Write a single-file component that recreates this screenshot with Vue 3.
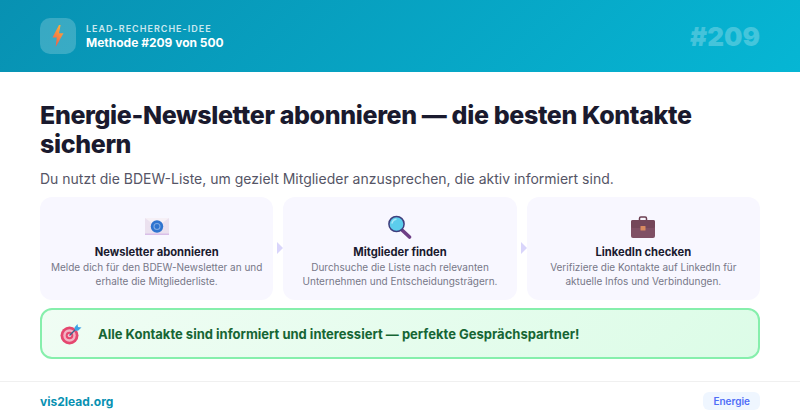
<template>
  <div class="slide">
    <header class="top">
      <div class="top-left">
        <div class="logo">
          <svg class="bolt" viewBox="0 0 12 22" width="12" height="22">
            <defs>
              <linearGradient id="boltFill" x1="0.7" y1="0" x2="0.3" y2="1">
                <stop offset="0" stop-color="#fbb03b" />
                <stop offset="1" stop-color="#ef5a4c" />
              </linearGradient>
            </defs>
            <path d="M7 0 L0.5 12.5 H4.8 L3.6 22 L11.5 8.2 H7 L8.6 0 Z" fill="url(#boltFill)" />
          </svg>
        </div>
        <div class="top-text">
          <div class="eyebrow">LEAD-RECHERCHE-IDEE</div>
          <div class="method">Methode #209 von 500</div>
        </div>
      </div>
      <div class="big-num">#209</div>
    </header>

    <main class="content">
      <h1 class="title">Energie-Newsletter abonnieren — die besten Kontakte sichern</h1>
      <p class="lead">Du nutzt die BDEW-Liste, um gezielt Mitglieder anzusprechen, die aktiv informiert sind.</p>

      <div class="steps">
        <div v-for="step in steps" :key="step.title" class="step">
          <svg class="step-icon" viewBox="0 0 24 24" width="24" height="24">
            <template v-if="step.icon === 'mail'">
              <rect x="0" y="3" width="24" height="17" fill="#ebe1ef" />
              <path d="M0 3 L12 12 L24 3 Z" fill="#f6f0f6" />
              <rect x="0" y="18.5" width="24" height="1.5" fill="#d9bfe8" />
              <circle cx="12" cy="11.5" r="6.2" fill="#2f74cf" />
              <circle cx="12" cy="11.5" r="3" fill="none" stroke="#7fa9e2" stroke-width="1.1" />
            </template>
            <template v-else-if="step.icon === 'search'">
              <path d="M14.5 15.5 L21.5 22" stroke="#6f3f86" stroke-width="3.6" stroke-linecap="round" />
              <circle cx="8.5" cy="9" r="7.6" fill="#5ccdec" stroke="#3f3f7e" stroke-width="1.5" />
              <path d="M4 8 A5 5 0 0 1 8 4.2" fill="none" stroke="#a8e8f7" stroke-width="1.4" stroke-linecap="round" />
            </template>
            <template v-else>
              <path d="M8.5 6 V3.4 Q8.5 2 9.9 2 H14.1 Q15.5 2 15.5 3.4 V6" fill="none" stroke="#6b3f52" stroke-width="1.5" />
              <rect x="0" y="5" width="24" height="18" rx="2" fill="#7f4f64" />
              <rect x="0" y="5" width="24" height="8" rx="2" fill="#744659" />
              <rect x="9.5" y="11" width="5" height="4.5" rx="0.6" fill="#d98a60" />
            </template>
          </svg>
          <div class="step-title">{{ step.title }}</div>
          <div class="step-text">{{ step.text }}</div>
        </div>
      </div>

      <div class="result">
        <svg class="result-icon" viewBox="0 0 22 22" width="22" height="22">
          <circle cx="9.5" cy="12.5" r="9" fill="#e5476f" />
          <circle cx="9.5" cy="12.5" r="6.2" fill="#f3b3c4" />
          <circle cx="9.5" cy="12.5" r="3.8" fill="#e5476f" />
          <circle cx="9.5" cy="12.5" r="1.8" fill="#f3c6d2" />
          <path d="M9.5 12.5 L17 5" stroke="#35678f" stroke-width="1.2" />
          <path d="M14.5 4.5 L17.5 1 L18 4 L21.5 4.5 L18 7.8 L15 7.4 Z" fill="#3ea3e6" />
        </svg>
        <span class="result-text">Alle Kontakte sind informiert und interessiert — perfekte Gesprächspartner!</span>
      </div>
    </main>

    <footer class="bottom">
      <span class="brand">vis2lead.org</span>
      <span class="tag">Energie</span>
    </footer>
  </div>
</template>

<script setup>
const steps = [
  {
    icon: 'mail',
    title: 'Newsletter abonnieren',
    text: 'Melde dich für den BDEW-Newsletter an und erhalte die Mitgliederliste.'
  },
  {
    icon: 'search',
    title: 'Mitglieder finden',
    text: 'Durchsuche die Liste nach relevanten Unternehmen und Entscheidungsträgern.'
  },
  {
    icon: 'case',
    title: 'LinkedIn checken',
    text: 'Verifiziere die Kontakte auf LinkedIn für aktuelle Infos und Verbindungen.'
  }
]
</script>

<style>
html,
body {
  margin: 0;
  background: #fff;
}
</style>

<style scoped>
.slide {
  width: 800px;
  height: 420px;
  display: flex;
  flex-direction: column;
  font-family: Inter, "Noto Sans", sans-serif;
  overflow: hidden;
}

.top {
  height: 72px;
  box-sizing: border-box;
  padding: 0 40px;
  display: flex;
  align-items: center;
  justify-content: space-between;
  background: linear-gradient(135deg, #0891b2, #06b6d4);
}

.top-left {
  display: flex;
  align-items: center;
  gap: 10px;
}

.logo {
  width: 36px;
  height: 36px;
  border-radius: 10px;
  background: rgba(255, 255, 255, 0.2);
  display: flex;
  align-items: center;
  justify-content: center;
}

.eyebrow {
  font-size: 9px;
  font-weight: 600;
  letter-spacing: 1px;
  line-height: 12px;
  color: rgba(255, 255, 255, 0.8);
}

.method {
  font-size: 12px;
  font-weight: 700;
  line-height: 15px;
  color: #fff;
}

.big-num {
  font-size: 26px;
  font-weight: 900;
  color: rgba(255, 255, 255, 0.25);
}

.content {
  flex: 1;
  padding: 29px 40px 0;
}

.title {
  margin: 0;
  font-size: 25px;
  font-weight: 800;
  letter-spacing: -0.36px;
  line-height: 29px;
  color: #1a1a2e;
}

.lead {
  margin: 9px 0 0;
  font-size: 14px;
  line-height: 21px;
  color: #555566;
}

.steps {
  display: flex;
  gap: 10px;
  margin-top: 8px;
}

.step {
  position: relative;
  flex: 1;
  height: 103px;
  box-sizing: border-box;
  padding: 18px 8px 0;
  border-radius: 12px;
  background: #f8f7ff;
  text-align: center;
}

.step:not(:last-child)::after {
  content: "";
  position: absolute;
  top: 45px;
  right: -10px;
  border-left: 6px solid #d9d5fb;
  border-top: 6px solid transparent;
  border-bottom: 6px solid transparent;
}

.step-icon {
  display: block;
  margin: 0 auto;
}

.step-title {
  margin-top: 6px;
  font-size: 11.2px;
  font-weight: 700;
  line-height: 14px;
  color: #1a1a2e;
}

.step-text {
  margin-top: 1px;
  font-size: 10px;
  line-height: 14px;
  color: #777788;
}

.result {
  display: flex;
  align-items: center;
  gap: 16px;
  height: 51px;
  box-sizing: border-box;
  margin-top: 8px;
  padding: 0 18px;
  border: 2px solid #86efac;
  border-radius: 12px;
  background: linear-gradient(135deg, #f0fdf4, #dcfce7);
}

.result-icon {
  flex-shrink: 0;
}

.result-text {
  font-size: 13px;
  font-weight: 700;
  color: #166534;
}

.bottom {
  height: 39px;
  box-sizing: border-box;
  padding: 0 40px;
  display: flex;
  align-items: center;
  justify-content: space-between;
  border-top: 1px solid #f0f0f0;
}

.brand {
  font-size: 12px;
  font-weight: 700;
  color: #0891b2;
}

.tag {
  padding: 3px 10px;
  border-radius: 6px;
  background: #eff6ff;
  font-size: 10px;
  font-weight: 600;
  color: #4f6ef7;
}
</style>
